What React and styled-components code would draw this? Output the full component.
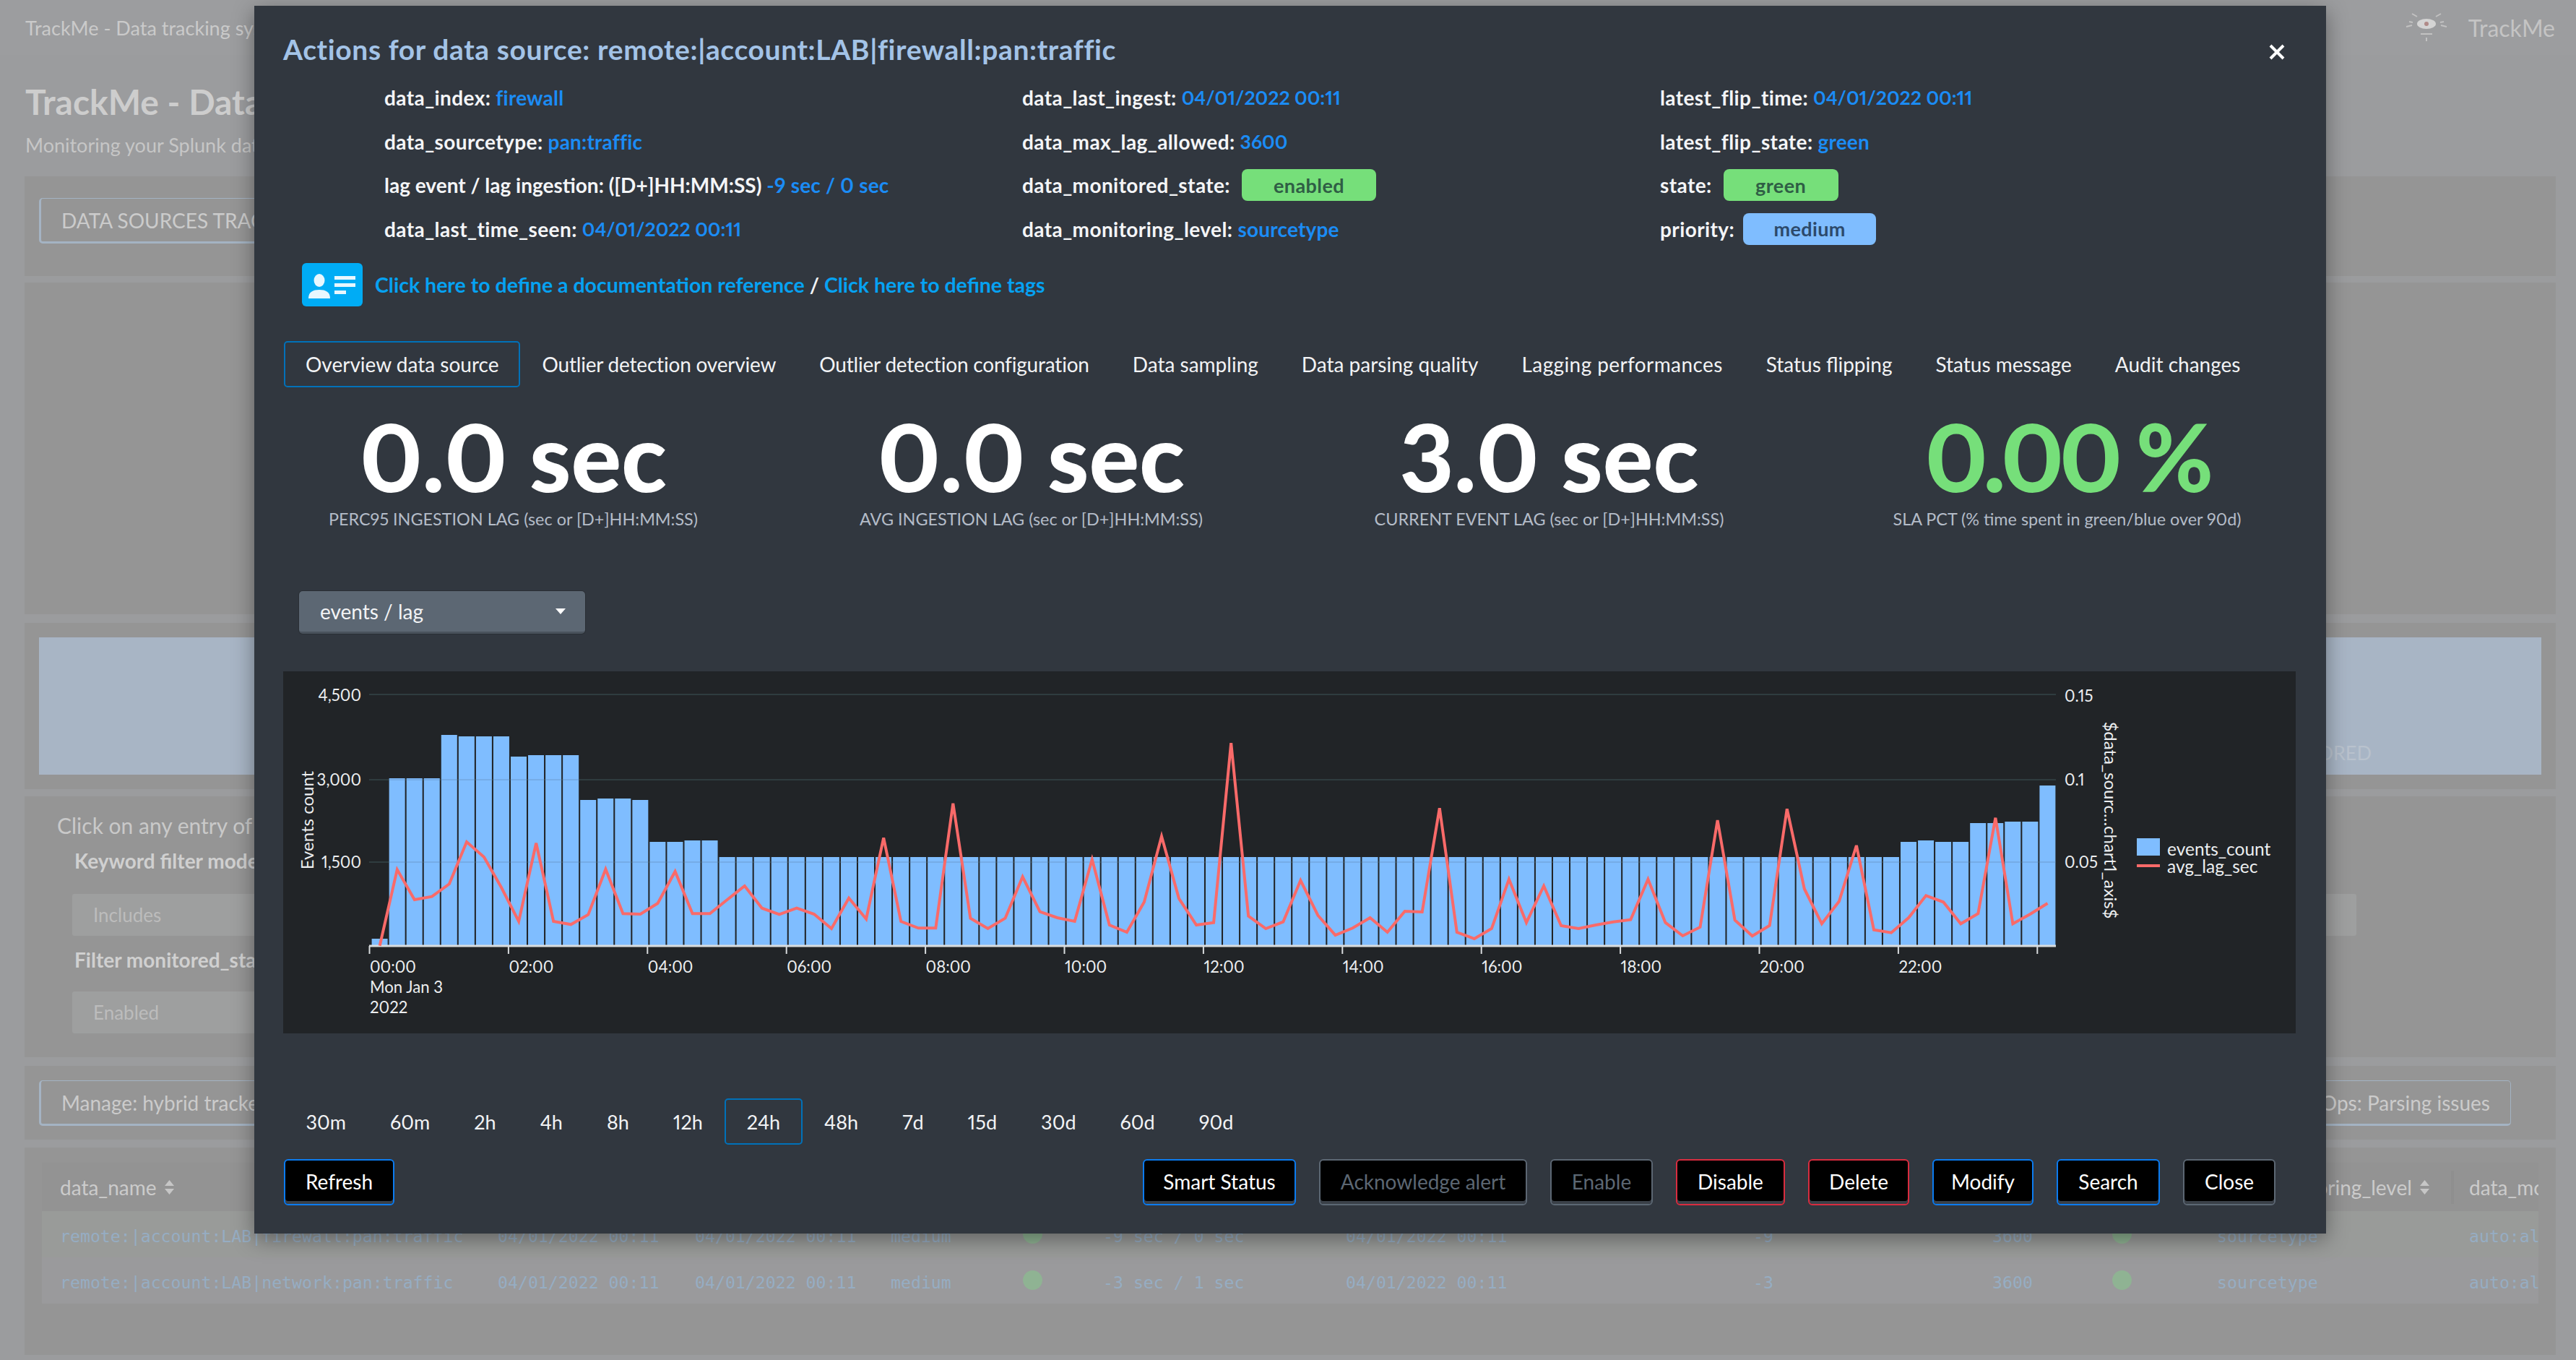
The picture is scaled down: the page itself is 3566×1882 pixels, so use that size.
import React from 'react';
import styled, { createGlobalStyle } from 'styled-components';

const FONT = '"Lato", "Open Sans", sans-serif';

const Global = createGlobalStyle`
  html, body { margin: 0; padding: 0; background: #9b9c9e; }
  body { font-family: ${FONT}; overflow: hidden; font-variant-numeric: proportional-nums; }
  #root { width: 3566px; height: 1882px; position: relative; overflow: hidden; }
  * { box-sizing: border-box; }
`;

/* ---------- dimmed page behind the dialog ---------- */
const Page = styled.div`
  width: 3566px; height: 1882px; background: #9b9c9e; color: #cdcdcd; overflow: hidden;
`;
const TopBar = styled.header`
  height: 76px; display: flex; align-items: center; justify-content: space-between;
  padding: 0 29px 0 35px; font-size: 27px; color: #cacaca; background: #9c9d9f;
`;
const Brand = styled.div`
  display: flex; align-items: center; gap: 28px; font-size: 32px; color: #c4c4c4;
`;
const Heading = styled.div`
  height: 168px; padding: 38px 0 0 35px;
`;
const HeadTitle = styled.div`
  font-size: 48px; font-weight: 700; line-height: 54px; color: #cdcdcd;
`;
const HeadSub = styled.div`
  font-size: 27px; line-height: 36px; margin-top: 15px; color: #c6c6c6;
`;
const Body = styled.div`
  padding: 0 28px 0 34px;
`;
const Panel = styled.section`
  height: ${p => p.$h}px; margin-top: ${p => p.$gap || 0}px; background: #959595;
  padding: ${p => p.$pad || '0'}; position: relative;
`;
const GhostButton = styled.div`
  height: 63px; padding: 0 28px; display: inline-flex; align-items: center; font-size: 28px;
  color: #cbcbcb; border: 1px solid #a4b3c3; border-bottom-width: 3px; border-left-width: 3px; border-radius: 5px;
  width: ${p => p.$w ? p.$w + 'px' : 'auto'};
`;
const GhostRow = styled.div`
  display: flex; justify-content: space-between; padding-right: 42px;
`;
const BlueBlock = styled.div`
  height: 190px; background: #a8b5c5; display: flex; align-items: flex-end; justify-content: flex-end;
  padding: 0 235px 14px 0; color: #b9c2cd; font-size: 27px;
`;
const HintLine = styled.div`
  font-size: 30px; line-height: 38px; color: #c9c9c9; padding: 21px 0 0 45px; height: 59px;
`;
const FieldLabel = styled.div`
  font-size: 28px; font-weight: 700; line-height: 32px; color: #d0d0d0; padding-left: 69px; margin-top: ${p => p.$top}px;
`;
const GhostSelect = styled.div`
  height: 58px; margin: ${p => p.$top}px 0 0 66px; width: ${p => p.$w}px; background: #9e9f9f;
  display: flex; align-items: center; padding-left: 29px; font-size: 26px; color: #bcbcbc; border-radius: 3px;
`;
const Table = styled.div`
  margin: 0 24px 0 24px; height: 216px; overflow: hidden;
`;
const grid = `
  display: grid; padding-left: 25px; align-items: center; white-space: nowrap;
  grid-template-columns: 606px 273px 271px 183px 111px 336px 564px 331px 166px 145px 349px 96px;
`;
const TableHead = styled.div`
  ${grid} height: 67px; background: #939393; font-size: 28px; color: #cbcbcb; margin-top: 21px;
`;
const TableRow = styled.div`
  ${grid} height: 64px; padding-top: 4px; background: ${p => p.$bg}; font-family: "DejaVu Sans Mono", monospace; font-size: 23.2px; color: #96adc3;
`;
const HeadCell = styled.span`
  display: inline-flex; align-items: center; gap: 10px; overflow: visible;
`;
const SplitCell = styled.span`
  position: relative;
  &::before { content: ""; position: absolute; left: -25px; top: -6px; bottom: -6px; width: 4px; background: #8f8f8f; }
`;
const Dot = styled.span`
  width: 27px; height: 27px; border-radius: 50%; background: #8fb393; display: block; margin-top: -5px;
`;

/* ---------- dialog ---------- */
const Modal = styled.div`
  position: absolute; left: 352px; top: 8px; width: 2868px; height: 1699px;
  background: #31373f; box-shadow: 0 8px 28px rgba(0, 0, 0, .38); color: #fff; font-family: ${FONT};
`;
const ModalHead = styled.div`
  height: 97px; padding: 36px 56px 0 40px; display: flex; justify-content: space-between; align-items: flex-start;
`;
const Title = styled.h2`
  margin: 0; font-size: 39px; font-weight: 700; line-height: 48px; letter-spacing: .62px; color: #a3c3e7; white-space: nowrap;
`;
const CloseX = styled.svg`
  width: 24px; height: 24px; margin-top: 16px; display: block;
`;
const InfoGrid = styled.div`
  display: grid; grid-template-columns: 883px 883px 740px; grid-auto-rows: 60.5px; padding-left: 180px; align-items: center;
`;
const InfoItem = styled.div`
  font-size: 28px; font-weight: 700; letter-spacing: ${p => p.$ls ?? 0.4}px; color: #f4f5f7; white-space: nowrap; display: flex; align-items: center;
`;
const InfoValue = styled.span`
  color: #1b8cf5; margin-left: 7px; font-size: ${p => (p.$num ? 26.5 : 28)}px; letter-spacing: ${p => (p.$num ? 0 : 0.2)}px;
`;
const Badge = styled.span`
  display: inline-flex; align-items: center; justify-content: center; height: 44px; width: ${p => p.$w}px;
  margin-left: ${p => p.$ml || 16}px; border-radius: 8px; background: ${p => p.$bg}; color: ${p => p.$fg}; font-size: 27px; font-weight: 700;
`;
const LinkRow = styled.div`
  margin-top: 17px; padding-left: 66px; height: 60px; display: flex; align-items: center; gap: 17px;
  font-size: 28.5px; font-weight: 700; color: #f0f2f5;
`;
const DocLink = styled.a`
  color: #06a2f2;
`;
const IconCard = styled.svg`
  width: 84px; height: 60px; display: block;
`;
const Pills = styled.div`
  display: flex; align-items: center; height: 64px; margin-left: 41px; margin-top: ${p => p.$top}px;
`;
const Pill = styled.div`
  height: 64px; padding: 0 ${p => p.$pad || 28}px; display: flex; align-items: center; font-size: ${p => p.$size}px; color: #f2f3f5;
  letter-spacing: ${p => p.$ls || 0}px;
  border: 2px solid ${p => (p.$active ? '#0071b9' : 'transparent')}; border-radius: 5px; white-space: nowrap;
`;
const Metrics = styled.div`
  display: grid; grid-template-columns: repeat(4, 717px); margin-top: 30px; text-align: center;
`;
const MetricValue = styled.div`
  font-size: 130px; line-height: 130px; font-weight: 900; letter-spacing: ${p => p.$ls || 0}px; color: ${p => p.$color || '#fff'}; white-space: nowrap;
`;
const MetricLabel = styled.div`
  margin-top: 7px; font-size: 23.4px; line-height: 30px; color: #b4bcc8; white-space: nowrap;
`;
const Select = styled.div`
  margin: 85px 0 0 62px; width: 396px; height: 59px; padding: 0 27px 0 29px; background: #5c6773; border-radius: 5px;
  border-bottom: 3px solid #49525c; box-shadow: 0 0 0 1px #2a2f35;
  display: flex; align-items: center; justify-content: space-between; font-size: 28px; color: #f2f3f5;
`;
const Caret = styled.span`
  width: 0; height: 0; border-left: 7px solid transparent; border-right: 7px solid transparent; border-top: 8px solid #fff;
`;
const ChartBox = styled.div`
  margin: 52px 0 0 40px; width: 2786px; height: 501px; background: #212427;
`;
const ChartSvg = styled.svg`
  display: block; width: 2786px; height: 501px;
`;
const AxisText = styled.text`
  font-family: ${FONT}; font-size: ${p => p.$size || 22.2}px; fill: #eceef0;
`;
const Footer = styled.div`
  display: flex; justify-content: space-between; margin: 20px 70px 0 41px;
`;
const ButtonGroup = styled.div`
  display: flex; gap: 32px;
`;
const COLORS = { blue: '#0b7bf0', red: '#d92c3f', gray: '#5c6773' };
const Btn = styled.button`
  height: 64px; width: ${p => p.$w}px; background: #000; font-family: ${FONT}; font-size: 28px;
  color: ${p => (p.$disabled ? '#5c6773' : '#fff')};
  border: 2px solid ${p => COLORS[p.$tone]}; border-radius: 6px; box-shadow: inset 0 -4px 0 #3a4048; padding: 0 0 2px;
`;

/* ---------- data ---------- */
const heights = [9, 231, 231, 231, 291, 289, 289, 289, 261, 263, 263, 263, 201, 203, 203, 201, 143, 143, 145, 145];
for (let i = 20; i < 88; i++) heights.push(122);
heights.push(143, 145, 143, 143, 169, 169, 171, 171, 221);

const lineZ = [1166, 850, 975, 962, 910, 735, 798, 925, 1065, 740, 1065, 1078, 1037, 848, 1033, 1035, 990, 858, 1033, 1033, 975, 918, 1010, 1036, 1010, 1035, 1095, 968, 1055,
  718, 1065, 1093, 1093, 575, 1052, 1095, 1052, 880, 1025, 1050, 1065, 808, 1080, 1110, 985, 712, 970, 1080, 1070, 325, 1043, 1095, 1067, 895, 1040, 1122, 1093, 1050, 1110, 1023, 1026,
  595, 1110, 1137, 1095, 890, 1070, 918, 1083, 1095, 1080, 1067, 1058, 890, 1070, 1125, 1089,
  645, 1060, 1126, 1082, 598, 930, 1075, 982, 750, 1100, 1112, 1050, 958, 985, 1075, 1033, 635, 1075, 1035, 990];

const PITCH = 24.05;
const linePoints = lineZ.map((z, i) => `${(525.7 + PITCH * i).toFixed(1)},${(920 + z / 3).toFixed(1)}`).join(' ');
const times = ['00:00', '02:00', '04:00', '06:00', '08:00', '10:00', '12:00', '14:00', '16:00', '18:00', '20:00', '22:00'];
const tabs = [['Overview data source', 0], ['Outlier detection overview', -0.2], ['Outlier detection configuration', -0.2], ['Data sampling', 0], ['Data parsing quality', 0], ['Lagging performances', 0.4], ['Status flipping', 0], ['Status message', 0], ['Audit changes', 0]];
const ranges = ['30m', '60m', '2h', '4h', '8h', '12h', '24h', '48h', '7d', '15d', '30d', '60d', '90d'];

const SortIcon = () => (
  <svg width="15" height="20" viewBox="0 0 15 20"><path d="M7.5 0 14 8H1zM7.5 20 1 12h13z" fill="#c6c6c6" /></svg>
);

const Logo = () => (
  <svg width="60" height="50" viewBox="0 0 60 50" fill="none" stroke="#c2c2c2" strokeWidth="2">
    <ellipse cx="30" cy="20" rx="13" ry="7" fill="#d4d4d4" stroke="none" />
    <circle cx="30" cy="20" r="3" fill="#b08a88" stroke="none" />
    <path d="M10 6l7 4M50 6l-7 4M2 24l8-2M58 24l-8-2M6 17l5 1M54 17l-5 1M22 34h16M30 39v5" />
  </svg>
);

const Chart = () => (
  <ChartSvg viewBox="392 929 2786 501">
    {[961, 1079, 1193].map(y => <line key={y} x1="511" x2="2846" y1={y} y2={y} stroke="#2f3c3f" strokeWidth="2" />)}
    {heights.map((h, i) => <rect key={i} x={514.6 + PITCH * i} y={1308 - h} width="22" height={h} fill="#7fbdff" />)}
    {[1079, 1193].map(y => <line key={y} x1="511" x2="2846" y1={y} y2={y} stroke="#2f3c3f" strokeWidth="2" opacity=".12" />)}
    <line x1="511" x2="2846" y1="1309" y2="1309" stroke="#d9dcde" strokeWidth="3" />
    {Array.from({ length: 13 }).map((_, k) => {
      const x = 511.5 + k * 8 * PITCH;
      return <line key={k} x1={x} x2={x} y1="1309" y2="1320" stroke="#d9dcde" strokeWidth="2" />;
    })}
    <polyline points={linePoints} fill="none" stroke="#f96a69" strokeWidth="4" strokeLinejoin="miter" />
    {[['4,500', 970], ['3,000', 1087], ['1,500', 1201]].map(([t, y]) => <AxisText key={t} x="500" y={y} textAnchor="end">{t}</AxisText>)}
    {[['0.15', 971], ['0.1', 1087], ['0.05', 1201]].map(([t, y]) => <AxisText key={t} x="2858" y={y}>{t}</AxisText>)}
    {times.map((t, k) => <AxisText key={t} x={512 + k * 8 * PITCH} y="1346">{t}</AxisText>)}
    <AxisText x="512" y="1374">Mon Jan 3</AxisText>
    <AxisText x="512" y="1402">2022</AxisText>
    <AxisText x="424" y="1135" $size="24" textAnchor="middle" dominantBaseline="central" transform="rotate(-90 424 1135)">Events count</AxisText>
    <AxisText x="2922" y="1135" $size="24" textAnchor="middle" dominantBaseline="central" transform="rotate(90 2922 1135)">$data_sourc...chart1_axis$</AxisText>
    <rect x="2958" y="1160" width="32" height="24" fill="#7fbdff" />
    <rect x="2958" y="1196" width="32" height="4" fill="#f96a69" />
    <AxisText x="3000" y="1184" $size="24.5">events_count</AxisText>
    <AxisText x="3000" y="1208" $size="24.5">avg_lag_sec</AxisText>
  </ChartSvg>
);

export default function App() {
  return (
    <>
      <Global />
      <Page>
        <TopBar>
          <span>TrackMe - Data tracking system for Splunk</span>
          <Brand><Logo />TrackMe</Brand>
        </TopBar>
        <Heading>
          <HeadTitle>TrackMe - Data tracking</HeadTitle>
          <HeadSub>Monitoring your Splunk data sources</HeadSub>
        </Heading>
        <Body>
          <Panel $h={138} $pad="30px 20px 0">
            <GhostButton $w={800}>DATA SOURCES TRACKING</GhostButton>
          </Panel>
          <Panel $h={459} $gap={9} />
          <Panel $h={230} $gap={12} $pad="20px 20px 0">
            <BlueBlock>MONITORED</BlueBlock>
          </Panel>
          <Panel $h={361} $gap={10}>
            <HintLine>Click on any entry of the table</HintLine>
            <FieldLabel $top={14}>Keyword filter mode</FieldLabel>
            <GhostSelect $top={30} $w={3162}>Includes</GhostSelect>
            <FieldLabel $top={17}>Filter monitored_state</FieldLabel>
            <GhostSelect $top={28} $w={1200}>Enabled</GhostSelect>
          </Panel>
          <Panel $h={102} $gap={12} $pad="20px 20px 0">
            <GhostRow>
              <GhostButton $w={800}>Manage: hybrid trackers</GhostButton>
              <GhostButton>Ops: Parsing issues</GhostButton>
            </GhostRow>
          </Panel>
          <Panel $h={287} $gap={11}>
            <Table>
              <TableHead>
                <HeadCell>data_name <SortIcon /></HeadCell>
                <span /><span /><span /><span /><span /><span /><span /><span /><span />
                <HeadCell>data_monitoring_level <SortIcon /></HeadCell>
                <SplitCell>data_monitored_state</SplitCell>
              </TableHead>
              <TableRow $bg="#999b99">
                <span>remote:|account:LAB|firewall:pan:traffic</span>
                <span>04/01/2022 00:11</span><span>04/01/2022 00:11</span><span>medium</span><Dot />
                <span>-9 sec / 0 sec</span><span>04/01/2022 00:11</span><span>-9</span><span>3600</span><Dot />
                <span>sourcetype</span><span>auto:all</span>
              </TableRow>
              <TableRow $bg="#9a9a9c">
                <span>remote:|account:LAB|network:pan:traffic</span>
                <span>04/01/2022 00:11</span><span>04/01/2022 00:11</span><span>medium</span><Dot />
                <span>-3 sec / 1 sec</span><span>04/01/2022 00:11</span><span>-3</span><span>3600</span><Dot />
                <span>sourcetype</span><span>auto:all</span>
              </TableRow>
            </Table>
          </Panel>
        </Body>
      </Page>

      <Modal>
        <ModalHead>
          <Title>Actions for data source: remote:|account:LAB|firewall:pan:traffic</Title>
          <CloseX viewBox="0 0 24 24"><path d="M3 3l18 18M21 3 3 21" stroke="#fff" strokeWidth="4" /></CloseX>
        </ModalHead>
        <InfoGrid>
          <InfoItem>data_index:<InfoValue>firewall</InfoValue></InfoItem>
          <InfoItem>data_last_ingest:<InfoValue $num>04/01/2022 00:11</InfoValue></InfoItem>
          <InfoItem>latest_flip_time:<InfoValue $num>04/01/2022 00:11</InfoValue></InfoItem>
          <InfoItem>data_sourcetype:<InfoValue>pan:traffic</InfoValue></InfoItem>
          <InfoItem>data_max_lag_allowed:<InfoValue $num>3600</InfoValue></InfoItem>
          <InfoItem>latest_flip_state:<InfoValue>green</InfoValue></InfoItem>
          <InfoItem $ls={0}>lag event / lag ingestion: ([D+]HH:MM:SS)<InfoValue>-9 sec / 0 sec</InfoValue></InfoItem>
          <InfoItem>data_monitored_state:<Badge $w={186} $bg="#76df7a" $fg="#2f5e45">enabled</Badge></InfoItem>
          <InfoItem>state:<Badge $w={159} $bg="#76df7a" $fg="#2f5e45">green</Badge></InfoItem>
          <InfoItem>data_last_time_seen:<InfoValue $num>04/01/2022 00:11</InfoValue></InfoItem>
          <InfoItem>data_monitoring_level:<InfoValue>sourcetype</InfoValue></InfoItem>
          <InfoItem>priority:<Badge $w={184} $ml={12} $bg="#7fbdff" $fg="#2c4a6b">medium</Badge></InfoItem>
        </InfoGrid>
        <LinkRow>
          <IconCard viewBox="0 0 84 60">
            <rect width="84" height="60" rx="6" fill="#00acf5" />
            <ellipse cx="24" cy="24" rx="7.5" ry="9" fill="#e8f7fe" />
            <path d="M9 49c0-9 6-12 15-12s15 3 15 12z" fill="#e8f7fe" />
            <path d="M45 18h29v5H45zM45 28h29v5H45zM45 38h16v5H45z" fill="#e8f7fe" />
          </IconCard>
          <span>
            <DocLink>Click here to define a documentation reference</DocLink> / <DocLink>Click here to define tags</DocLink>
          </span>
        </LinkRow>
        <Pills $top={48}>
          {tabs.map(([t, ls], i) => <Pill key={t} $size={28} $ls={ls} $active={i === 0}>{t}</Pill>)}
        </Pills>
        <Metrics>
          <div><MetricValue>0.0 sec</MetricValue><MetricLabel>PERC95 INGESTION LAG (sec or [D+]HH:MM:SS)</MetricLabel></div>
          <div><MetricValue>0.0 sec</MetricValue><MetricLabel>AVG INGESTION LAG (sec or [D+]HH:MM:SS)</MetricLabel></div>
          <div><MetricValue>3.0 sec</MetricValue><MetricLabel>CURRENT EVENT LAG (sec or [D+]HH:MM:SS)</MetricLabel></div>
          <div><MetricValue $color="#76df7a" $ls={-6}>0.00 %</MetricValue><MetricLabel>SLA PCT (% time spent in green/blue over 90d)</MetricLabel></div>
        </Metrics>
        <Select>events / lag<Caret /></Select>
        <ChartBox><Chart /></ChartBox>
        <Pills $top={90}>
          {ranges.map(r => <Pill key={r} $size={27} $pad={28.5} $active={r === '24h'}>{r}</Pill>)}
        </Pills>
        <Footer>
          <Btn $tone="blue" $w={153}>Refresh</Btn>
          <ButtonGroup>
            <Btn $tone="blue" $w={212}>Smart Status</Btn>
            <Btn $tone="gray" $w={288} $disabled>Acknowledge alert</Btn>
            <Btn $tone="gray" $w={142} $disabled>Enable</Btn>
            <Btn $tone="red" $w={151}>Disable</Btn>
            <Btn $tone="red" $w={140}>Delete</Btn>
            <Btn $tone="blue" $w={140}>Modify</Btn>
            <Btn $tone="blue" $w={143}>Search</Btn>
            <Btn $tone="gray" $w={128}>Close</Btn>
          </ButtonGroup>
        </Footer>
      </Modal>
    </>
  );
}
